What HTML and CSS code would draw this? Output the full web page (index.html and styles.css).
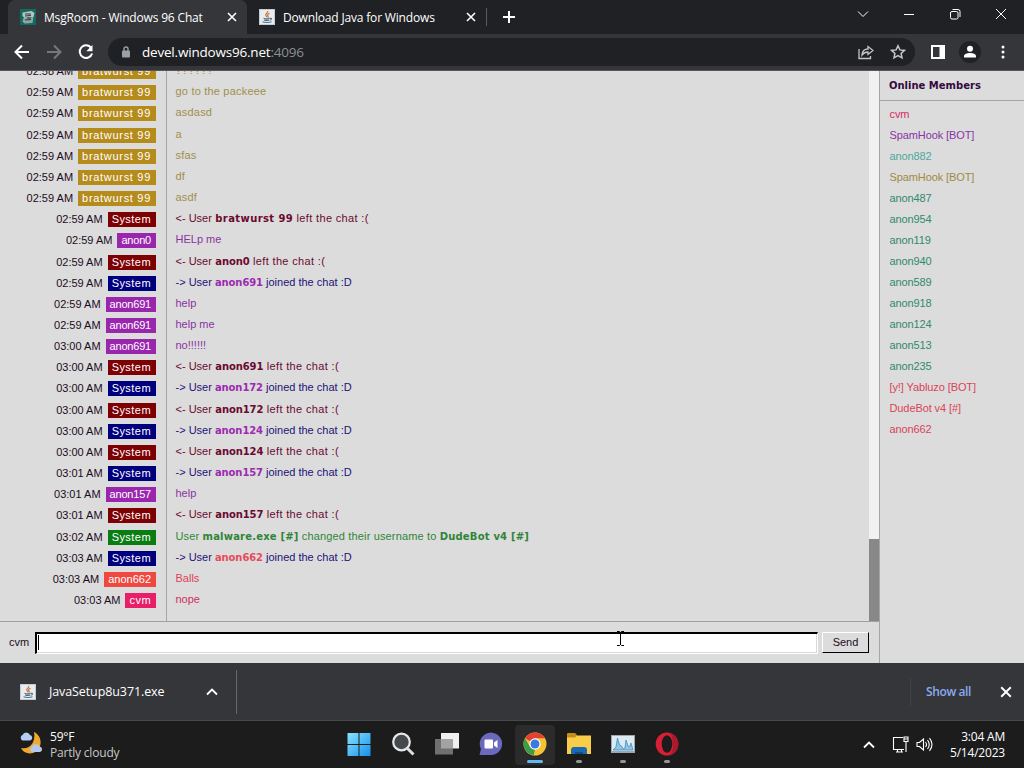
FILE: index.html
```
<!DOCTYPE html>
<html lang="en">
<head>
    <meta charset="UTF-8">
    <title>MsgRoom - Windows 96 Chat</title>
    <link rel="stylesheet" href="styles.css">
</head>
<body>
    <!-- shared icons -->
    <svg width="0" height="0" class="defs">
        <symbol id="java" viewBox="0 0 16 16">
            <rect width="16" height="16" fill="#c3ccd3"/>
            <path d="M1 1h14v14H1z" fill="#e9ecee"/>
            <path d="M8.7 2c1 1.6-2.6 2.7-1.9 4.3.3.7 1 1.1.9 1.900M10.500 4.200c-2 1-2.300 1.900-1.500 2.800.4.600.3 1.100-.3 1.600" fill="none" stroke="#c67638" stroke-width="1.200"/>
            <path d="M4.500 9.300c1.800.6 4.600.6 6.300 0M5 11c1.500.5 4 .5 5.300 0M11 9.300c1.900-.4 1.900 1.300.1 2M3.500 12.800c2.200.9 7 .9 9 0" fill="none" stroke="#4f7188" stroke-width="1.200"/>
        </symbol>
        <symbol id="cross" viewBox="0 0 10 10">
            <path d="M1 1l8 8M9 1l-8 8" fill="none" stroke="currentColor" stroke-width="1.600"/>
        </symbol>
        <symbol id="chevron-up" viewBox="0 0 12 8">
            <path d="M1 6.500l5-5 5 5" fill="none" stroke="currentColor" stroke-width="1.800"/>
        </symbol>
    </svg>

    <div class="tabstrip">
        <div class="tab active">
            <svg class="favicon" viewBox="0 0 16 16">
                <rect width="16" height="16" fill="#12695f"/>
                <path d="M2.500 3.500l9-1.500 3 2-1 4-9 1-2-2z" fill="#b9c4c2"/>
                <path d="M3.500 9l10-1-1 6-8 .5-2-2z" fill="#8fa5a1"/>
                <path d="M5 5h6M5 7l6-.5M5 11l6-.5M7 9h4" stroke="#263c3b" stroke-width="1"/>
            </svg>
            <span class="tab-title">MsgRoom - Windows 96 Chat</span>
            <svg class="tab-close"><use href="#cross"/></svg>
        </div>
        <div class="tab second">
            <svg class="favicon"><use href="#java"/></svg>
            <span class="tab-title">Download Java for Windows</span>
            <svg class="tab-close"><use href="#cross"/></svg>
        </div>
        <svg class="new-tab" viewBox="0 0 12 12"><path d="M6 0v12M0 6h12" stroke="#fff" stroke-width="2"/></svg>
        <div class="window-buttons">
            <svg viewBox="0 0 12 12"><path d="M1 3.500l5 5 5-5"/></svg>
            <svg viewBox="0 0 12 12"><path d="M1 6.500h10"/></svg>
            <svg viewBox="0 0 12 12"><rect x="1.500" y="3.500" width="7.500" height="7.500" rx="1.500"/><path d="M3.500 1.500h5.500q2 0 2 2v5.500"/></svg>
            <svg viewBox="0 0 12 12"><path d="M1 1l10 10M11 1L1 11"/></svg>
        </div>
    </div>

    <div class="toolbar">
        <svg class="nav" viewBox="0 0 16 16"><path d="M15 8H2M8 1.500L1.500 8 8 14.500"/></svg>
        <svg class="nav forward" viewBox="0 0 16 16"><path d="M1 8h13M8 1.500L14.500 8 8 14.500"/></svg>
        <svg class="nav" viewBox="0 0 16 16"><path d="M13.200 4A6.300 6.300 0 1 0 14.100 9.500"/><path d="M14.500 1v6.200H8.300z" class="fill"/></svg>
        <div class="omnibox">
            <svg class="lock" viewBox="0 0 10 12"><rect x="1" y="4.500" width="8" height="7" rx="1" fill="#9aa0a6"/><path d="M3 5V3a2 2 0 0 1 4 0v2" fill="none" stroke="#9aa0a6" stroke-width="1.400"/></svg>
            <span class="url">devel.windows96.net<span class="port">:4096</span></span>
            <svg class="share" viewBox="0 0 16 16"><path d="M1 5v9.500h11.500V12M4 11c.3-4 2.500-6 6-6V2.500L15 6.500l-5 4V8C7.500 8 5.500 9 4 11z"/></svg>
            <svg class="star" viewBox="0 0 16 16"><path d="M8 1.800l1.900 4.100 4.500.5-3.300 3 .9 4.400L8 11.500l-4 2.300.9-4.400-3.300-3 4.500-.5z"/></svg>
        </div>
        <svg class="panel" viewBox="0 0 14 14"><path d="M0 0h14v14H0zM2 2v10h6.500V2z" fill="#fff" fill-rule="evenodd"/></svg>
        <svg class="avatar" viewBox="0 0 22 22"><circle cx="11" cy="11" r="11" fill="#202124"/><circle cx="11" cy="7.800" r="3" fill="#fff"/><path d="M5 16.500v-1.300c0-4.300 12-4.300 12 0v1.300z" fill="#fff"/></svg>
        <svg class="dots" viewBox="0 0 4 14"><circle cx="2" cy="2" r="1.500"/><circle cx="2" cy="7" r="1.500"/><circle cx="2" cy="12" r="1.500"/></svg>
    </div>

    <div class="page">
        <div class="chat">
            <div class="log-wrap">
                <div class="log">
                    <div class="row gold"><div class="who">02:58 AM <b>bratwurst 99</b></div><div class="msg">??????</div></div>
                    <div class="row gold"><div class="who">02:59 AM <b>bratwurst 99</b></div><div class="msg">go to the packeee</div></div>
                    <div class="row gold"><div class="who">02:59 AM <b>bratwurst 99</b></div><div class="msg">asdasd</div></div>
                    <div class="row gold"><div class="who">02:59 AM <b>bratwurst 99</b></div><div class="msg">a</div></div>
                    <div class="row gold"><div class="who">02:59 AM <b>bratwurst 99</b></div><div class="msg">sfas</div></div>
                    <div class="row gold"><div class="who">02:59 AM <b>bratwurst 99</b></div><div class="msg">df</div></div>
                    <div class="row gold"><div class="who">02:59 AM <b>bratwurst 99</b></div><div class="msg">asdf</div></div>
                    <div class="row left"><div class="who">02:59 AM <b>System</b></div><div class="msg"><span>&lt;- User</span> <strong class="wide">bratwurst 99</strong> left the chat :(</div></div>
                    <div class="row purple"><div class="who">02:59 AM <b>anon0</b></div><div class="msg">HELp me</div></div>
                    <div class="row left"><div class="who">02:59 AM <b>System</b></div><div class="msg"><span>&lt;- User</span> <strong>anon0</strong> left the chat :(</div></div>
                    <div class="row joined"><div class="who">02:59 AM <b>System</b></div><div class="msg">-&gt; User <strong>anon691</strong> joined the chat :D</div></div>
                    <div class="row purple"><div class="who">02:59 AM <b>anon691</b></div><div class="msg">help</div></div>
                    <div class="row purple"><div class="who">02:59 AM <b>anon691</b></div><div class="msg">help me</div></div>
                    <div class="row purple"><div class="who">03:00 AM <b>anon691</b></div><div class="msg">no!!!!!!</div></div>
                    <div class="row left"><div class="who">03:00 AM <b>System</b></div><div class="msg"><span>&lt;- User</span> <strong>anon691</strong> left the chat :(</div></div>
                    <div class="row joined"><div class="who">03:00 AM <b>System</b></div><div class="msg">-&gt; User <strong>anon172</strong> joined the chat :D</div></div>
                    <div class="row left"><div class="who">03:00 AM <b>System</b></div><div class="msg"><span>&lt;- User</span> <strong>anon172</strong> left the chat :(</div></div>
                    <div class="row joined"><div class="who">03:00 AM <b>System</b></div><div class="msg">-&gt; User <strong>anon124</strong> joined the chat :D</div></div>
                    <div class="row left"><div class="who">03:00 AM <b>System</b></div><div class="msg"><span>&lt;- User</span> <strong>anon124</strong> left the chat :(</div></div>
                    <div class="row joined"><div class="who">03:01 AM <b>System</b></div><div class="msg">-&gt; User <strong>anon157</strong> joined the chat :D</div></div>
                    <div class="row purple"><div class="who">03:01 AM <b>anon157</b></div><div class="msg">help</div></div>
                    <div class="row left"><div class="who">03:01 AM <b>System</b></div><div class="msg"><span>&lt;- User</span> <strong>anon157</strong> left the chat :(</div></div>
                    <div class="row renamed"><div class="who">03:02 AM <b>System</b></div><div class="msg">User <strong>malware.exe [#]</strong> changed their username to <strong>DudeBot v4 [#]</strong></div></div>
                    <div class="row joined red-user"><div class="who">03:03 AM <b>System</b></div><div class="msg">-&gt; User <strong>anon662</strong> joined the chat :D</div></div>
                    <div class="row red"><div class="who">03:03 AM <b>anon662</b></div><div class="msg">Balls</div></div>
                    <div class="row pink"><div class="who">03:03 AM <b>cvm</b></div><div class="msg">nope</div></div>
                </div>
                <div class="scrollbar"><div class="thumb"></div></div>
            </div>
            <div class="compose">
                <label>cvm</label>
                <div class="input"><i class="caret"></i></div>
                <button>Send</button>
                <svg class="ibeam" viewBox="0 0 9 15"><path d="M1 .5h2.500l1 1 1-1H8M1 14.500h2.500l1-1 1 1H8M4.500 1v13" fill="none" stroke="#000"/></svg>
            </div>
        </div>
        <div class="members">
            <h2>Online Members</h2>
            <ul>
                <li class="c-pink">cvm</li>
                <li class="c-purple">SpamHook [BOT]</li>
                <li class="c-teal">anon882</li>
                <li class="c-gold">SpamHook [BOT]</li>
                <li>anon487</li>
                <li>anon954</li>
                <li>anon119</li>
                <li>anon940</li>
                <li>anon589</li>
                <li>anon918</li>
                <li>anon124</li>
                <li>anon513</li>
                <li>anon235</li>
                <li class="c-red">[y!] Yabluzo [BOT]</li>
                <li class="c-red">DudeBot v4 [#]</li>
                <li class="c-red">anon662</li>
            </ul>
        </div>
    </div>

    <div class="downloads">
        <div class="download">
            <svg class="favicon"><use href="#java"/></svg>
            <span class="file">JavaSetup8u371.exe</span>
            <svg class="expand"><use href="#chevron-up"/></svg>
        </div>
        <div class="show-all">Show all</div>
        <svg class="shelf-close"><use href="#cross"/></svg>
    </div>

    <div class="taskbar">
        <div class="weather">
            <svg viewBox="0 0 24 24">
                <path d="M15 1c9 4 9 18-1 21C9 23.500 4 21 2 17c9 2 15-6 13-16z" fill="#f0a92c"/>
                <path d="M3.500 9.500a3 3 0 0 1 0-5.500A4 4 0 0 1 11 4a2.800 2.800 0 0 1 0 5.500z" fill="#b5cdf5"/>
                <path d="M13 21a3 3 0 0 1 0-5.500 4 4 0 0 1 7.500 0A2.800 2.800 0 0 1 21 21z" fill="#b9c6ec"/>
            </svg>
            <div class="weather-text"><div>59°F</div><div class="dim">Partly cloudy</div></div>
        </div>
        <div class="apps">
            <div class="app"><svg viewBox="0 0 24 24">
                <defs><linearGradient id="win" x1="0" y1="0" x2="1" y2="1"><stop offset="0" stop-color="#8be2fd"/><stop offset="1" stop-color="#1391ec"/></linearGradient></defs>
                <path d="M.5 1h11v11H.5zM12.500 1h11v11h-11zM.5 13h11v11H.5zM12.500 13h11v11h-11z" fill="url(#win)"/></svg></div>
            <div class="app"><svg viewBox="0 0 24 24"><circle cx="10.500" cy="10" r="8.300" fill="#45494c" stroke="#e8e8e8" stroke-width="2.200"/><path d="M16.500 16.500l6 6" stroke="#dedede" stroke-width="3"/></svg></div>
            <div class="app"><svg viewBox="0 0 24 24"><path d="M6 1h18v15.500H6z" fill="#f0f0f0"/><path d="M0 7h18v15.500H0z" fill="#707070"/><path d="M6 7h12v9.500H6z" fill="#a3a3a3"/></svg></div>
            <div class="app"><svg viewBox="0 0 24 24"><path d="M.5 23l1.500-6A11.200 11.200 0 1 1 12 23z" fill="#6c68bd"/><rect x="5.500" y="7.500" width="8.500" height="9" rx="1" fill="#fff"/><path d="M15 10.500l3.500-2.500v8l-3.500-2.500z" fill="#fff"/></svg></div>
            <div class="app current"><svg viewBox="0 0 24 24">
                <circle cx="12" cy="12" r="11.500" fill="#f6c233"/>
                <path d="M12 12L2 6.300A11.500 11.500 0 0 1 22 6.300H12z" fill="#df4432"/>
                <path d="M2 6.300l5.100 8.600L12 17.500l-1.500 5.900A11.500 11.500 0 0 1 2 6.300z" fill="#3d9b4b"/>
                <circle cx="12" cy="12" r="5.700" fill="#fff"/><circle cx="12" cy="12" r="4.500" fill="#3979e4"/></svg></div>
            <div class="app running"><svg viewBox="0 0 24 24"><path d="M0 2q0-1 1-1h7l2 2v5H0z" fill="#c38f16"/><path d="M0 5.500h8l2-2h14V22H0z" fill="#f8cd48"/><path d="M4 22v-4q0-3 3-3h10q3 0 3 3v4z" fill="#1a69b3"/><path d="M8 22v-2h8v2z" fill="#134d84"/></svg></div>
            <div class="app running"><svg viewBox="0 0 24 24"><path d="M0 3h24v18H0z" fill="#9ba8b1"/><path d="M1 4h22v15H1z" fill="#dceaf2"/><path d="M2 18l3-3 1.500-9 2 7 2 1 1.500 3 2-1 1-8 2 6 1.500 1L20 11l2 7z" fill="#8fc6e6" stroke="#3d8dbd" stroke-width=".8"/></svg></div>
            <div class="app running"><svg viewBox="0 0 24 24"><ellipse cx="12" cy="12" rx="11.300" ry="11.500" fill="#d81f35"/><path d="M14 .7c5 3 6 19 0 22.600 13-2 12-20.500 0-22.600z" fill="#a91a2c"/><ellipse cx="12" cy="12" rx="5.300" ry="8.700" fill="#1c1c1c"/></svg></div>
        </div>
        <div class="tray">
            <svg class="up"><use href="#chevron-up"/></svg>
            <svg class="net" viewBox="0 0 17 17"><path d="M11 1.500H1.500v12H12M4 16h7M5.500 13.500V16M9.500 13.500V16M12 1h4v4.500h-4zM14 5.500V16M12 3h4"/></svg>
            <svg class="sound" viewBox="0 0 17 15"><path d="M1 5.500h2.500L7.500 2v11L3.500 9.500H1zM9.500 5q2 2.500 0 5M11.500 3q3.500 4.500 0 9M13.500 1.200q5 6.300 0 12.600"/></svg>
            <div class="clock"><div>3:04 AM</div><div>5/14/2023</div></div>
        </div>
    </div>
</body>
</html>
```
FILE: styles.css
```
* {
    box-sizing: border-box;
}

body {
    margin: 0;
    width: 1024px;
    height: 768px;
    overflow: hidden;
    display: flex;
    flex-direction: column;
    font-family: "Open Sans", "Noto Sans", sans-serif;
    font-size: 12px;
    letter-spacing: -0.2px;
    color: #fff;
}

svg {
    flex: none;
    display: block;
}

.defs {
    position: absolute;
}

/* browser chrome */
.tabstrip {
    height: 34px;
    flex: none;
    background: #202124;
    display: flex;
    align-items: center;
    padding-left: 8px;
}

.tab {
    width: 239px;
    height: 34px;
    display: flex;
    align-items: center;
    padding: 0 10px 0 12px;
}

.tab.active {
    background: #35363a;
    border-radius: 7px 7px 0 0;
}

.tab.second {
    width: 240px;
    height: 18px;
    border-right: 1px solid #5a5b5f;
}

.favicon {
    width: 16px;
    height: 16px;
}

.tab-title {
    flex: 1;
    margin-left: 8px;
    white-space: nowrap;
    letter-spacing: -0.17px;
}

.tab-close {
    width: 10px;
    height: 10px;
}

.new-tab {
    width: 12px;
    height: 12px;
    margin-left: 16px;
}

.window-buttons {
    display: flex;
    gap: 34px;
    margin-left: auto;
    margin-right: 17px;
    margin-bottom: 6px;
}

.window-buttons svg {
    width: 12px;
    height: 12px;
    fill: none;
    stroke: #fff;
}

.toolbar {
    height: 37px;
    flex: none;
    background: #35363a;
    border-bottom: 1px solid #57555b;
    display: flex;
    align-items: center;
    padding-left: 14px;
}

.nav {
    width: 16px;
    height: 16px;
    margin-right: 16px;
    fill: none;
    stroke: #fff;
    stroke-width: 2;
}

.nav.forward {
    stroke: #77787b;
}

.nav .fill {
    fill: #fff;
    stroke: none;
}

.omnibox {
    width: 807px;
    height: 28px;
    margin-left: -2px;
    border-radius: 14px;
    background: #202124;
    display: flex;
    align-items: center;
    padding: 0 9px 0 13px;
}

.lock {
    width: 10px;
    height: 12px;
}

.url {
    flex: 1;
    margin-left: 11px;
    font-size: 13.5px;
}

.port {
    color: #8b8e93;
}

.share,
.star {
    width: 16px;
    height: 16px;
    fill: none;
    stroke: #c4c6c9;
    stroke-width: 1.3;
}

.star {
    margin-left: 16px;
    stroke-width: 1.5;
}

.panel {
    width: 14px;
    height: 14px;
    margin-left: 16px;
}

.avatar {
    width: 22px;
    height: 22px;
    margin-left: 14px;
}

.dots {
    width: 4px;
    height: 14px;
    margin-left: 20px;
    fill: #fff;
}

/* chat page */
.page {
    height: 592px;
    flex: none;
    display: flex;
    background: #dcdcdc;
    color: #1c0b22;
    font: 11px/15px "Liberation Sans", Arial, sans-serif;
    letter-spacing: 0;
}

.chat {
    width: 880px;
    display: flex;
    flex-direction: column;
    border-right: 1px solid #a5a5a5;
}

.log-wrap {
    height: 551px;
    flex: none;
    display: flex;
    border-bottom: 1px solid #a0a0a0;
}

.log {
    flex: 1;
    display: flex;
    flex-direction: column;
    justify-content: flex-end;
    overflow: hidden;
}

.row {
    height: 21.17px;
    flex: none;
    display: flex;
    white-space: nowrap;
}

.row:last-child {
    height: 31px;
}

.who {
    width: 167px;
    height: 100%;
    flex: none;
    display: flex;
    justify-content: flex-end;
    padding: 3px 10px 0 0;
    border-right: 1px solid #a5a5a5;
}

.who b {
    height: 15px;
    margin-left: 5px;
    padding: 0 5px 0 4px;
    font-weight: normal;
    letter-spacing: 0.45px;
    color: #fff;
}

.msg {
    padding: 2px 0 0 8.5px;
}

.msg strong,
.members h2 {
    font-family: "DejaVu Sans", Verdana, sans-serif;
    font-size: 10px;
}

.msg strong {
    letter-spacing: -0.1px;
    line-height: 1;
}

.msg .wide {
    letter-spacing: 0.4px;
}

.gold .who b {
    background: #b58b1c;
    letter-spacing: 0.7px;
}

.gold .msg {
    color: #a08f4c;
    letter-spacing: 0.2px;
}

.left .who b {
    background: #7d0003;
}

.left .msg {
    color: #6b0930;
    letter-spacing: 0.35px;
}

.left .msg span {
    letter-spacing: 0;
}

.joined .who b {
    background: #00007e;
}

.joined .msg {
    color: #1c1378;
}

.joined strong {
    color: #9c2bb0;
}

.red-user strong {
    color: #e74c5b;
}

.renamed .who b {
    background: #0a7d12;
}

.renamed .msg {
    color: #2f8537;
    letter-spacing: 0.15px;
}

.renamed strong {
    letter-spacing: 0.2px;
}

.purple .who b {
    background: #9a26ae;
    letter-spacing: -0.2px;
}

.purple .msg {
    color: #8b33a1;
}

.red .who b {
    background: #ee4840;
    letter-spacing: 0;
}

.red .msg {
    color: #dd4354;
}

.pink .who b {
    background: #e81e68;
}

.pink .msg {
    color: #cf2f5f;
}

.scrollbar {
    width: 10px;
    background: #f1f1f1;
    display: flex;
    align-items: flex-end;
}

.thumb {
    width: 10px;
    height: 82px;
    background: #888;
}

.compose {
    position: relative;
    flex: 1;
    display: flex;
    align-items: center;
    padding: 0 10px 0 9px;
}

.compose label {
    width: 26px;
}

.input {
    width: 783px;
    height: 22px;
    background: #fff;
    border: 1px solid #fff;
    border-top: 2px solid #000;
    border-left: 2px solid #000;
    box-shadow: inset -1px -1px #d8d8d8;
    padding: 1px;
}

.caret {
    display: block;
    width: 1px;
    height: 15px;
    background: #000;
}

.compose button {
    width: 47px;
    height: 21px;
    margin-left: auto;
    padding: 0;
    font: inherit;
    color: #1c0b22;
    background: #dcdcdc;
    border: 1px solid #fff;
    border-right-color: #000;
    border-bottom-color: #000;
}

/* text cursor floating over the input */
.ibeam {
    position: absolute;
    left: 616px;
    top: 9px;
    width: 9px;
    height: 15px;
}

.members {
    flex: 1;
}

.members h2 {
    height: 30px;
    margin: 0;
    padding-left: 9px;
    border-bottom: 1px solid #a5a5a5;
    line-height: 30px;
    color: #330a3c;
}

.members ul {
    margin: 0;
    padding: 3px 0 0 9.5px;
    list-style: none;
    line-height: 21px;
    letter-spacing: -0.1px;
    color: #2f8a6d;
}

.c-pink { color: #d92a5e; }
.c-purple { color: #8b33a8; }
.c-teal { color: #4ba99b; }
.c-gold { color: #a08a42; }
.c-red { color: #da4459; }

/* download shelf */
.downloads {
    height: 58px;
    flex: none;
    background: #35363a;
    border-bottom: 1px solid #48494c;
    display: flex;
    align-items: center;
}

.download {
    width: 237px;
    height: 44px;
    border-right: 1px solid #66676a;
    display: flex;
    align-items: center;
    padding: 0 18px 0 20px;
}

.file {
    flex: 1;
    margin-left: 13px;
    font-size: 12.5px;
    letter-spacing: -0.1px;
}

.expand {
    width: 12px;
    height: 8px;
}

.show-all {
    margin-left: auto;
    padding-left: 15px;
    border-left: 1px solid #414245;
    line-height: 28px;
    font-weight: 600;
    letter-spacing: -0.4px;
    color: #8aaaf0;
}

.shelf-close {
    width: 12px;
    height: 12px;
    margin: 0 12px 0 29px;
}

/* windows taskbar */
.taskbar {
    flex: 1;
    background: #1c1c1c;
    display: flex;
    align-items: center;
    line-height: 16px;
}

.weather {
    width: 337px;
    display: flex;
    align-items: center;
    padding-left: 19px;
}

.weather svg {
    width: 24px;
    height: 24px;
    margin-bottom: 4px;
}

.weather-text {
    margin-left: 7px;
}

.dim {
    color: #c7c7c7;
}

.apps {
    display: flex;
}

.app {
    width: 44px;
    height: 40px;
    padding: 7px 10px 0;
    position: relative;
}

.app svg {
    width: 24px;
    height: 24px;
}

.current {
    width: 40px;
    margin: 0 2px;
    padding: 7px 8px 0;
    background: #2b2b2b;
    border-radius: 4px;
}

.running::after,
.current::after {
    content: "";
    position: absolute;
    bottom: 2px;
    left: 19px;
    width: 6px;
    height: 3px;
    border-radius: 2px;
    background: #959595;
}

.current::after {
    left: 12px;
    width: 16px;
    background: #63b9ee;
}

.tray {
    margin-left: auto;
    display: flex;
    align-items: center;
    padding-right: 19px;
}

.up {
    width: 12px;
    height: 8px;
}

.net,
.sound {
    fill: none;
    stroke: #fff;
    stroke-width: 1.1;
}

.net {
    width: 17px;
    height: 17px;
    margin-left: 17px;
}

.sound {
    width: 17px;
    height: 15px;
    margin-left: 7px;
}

.clock {
    width: 72px;
    text-align: right;
}
```
